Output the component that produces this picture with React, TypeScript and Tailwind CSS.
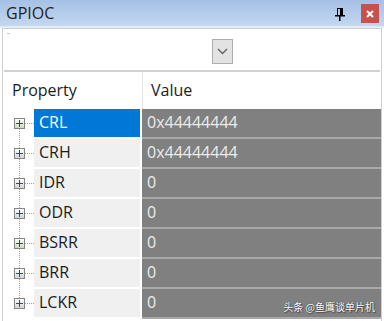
import React from "react";

const rows = [
  { name: "CRL", value: "0x44444444", selected: true },
  { name: "CRH", value: "0x44444444" },
  { name: "IDR", value: "0" },
  { name: "ODR", value: "0" },
  { name: "BSRR", value: "0" },
  { name: "BRR", value: "0" },
  { name: "LCKR", value: "0" },
];

function TreeGutter({ first, last }: { first: boolean; last: boolean }) {
  return (
    <svg width="31" height="30" viewBox="0 0 31 30" className="block shrink-0">
      <defs>
        <linearGradient id="pbg" x1="0" y1="0" x2="0" y2="1">
          <stop offset="0" stopColor="#ffffff" />
          <stop offset="1" stopColor="#d2d2d2" />
        </linearGradient>
      </defs>
      {!first && (
        <line x1="16.5" y1="0" x2="16.5" y2="9" stroke="#a0a0a0" strokeDasharray="1 1" />
      )}
      {!last && (
        <line x1="16.5" y1="20" x2="16.5" y2="30" stroke="#a0a0a0" strokeDasharray="1 1" />
      )}
      <line x1="22" y1="14.5" x2="31" y2="14.5" stroke="#a0a0a0" strokeDasharray="1 1" />
      <rect x="11.5" y="9.5" width="10" height="10" fill="url(#pbg)" stroke="#858585" />
      <rect x="13" y="14" width="7" height="1" fill="#2a4790" />
      <rect x="16" y="11" width="1" height="7" fill="#2a4790" />
    </svg>
  );
}

export default function App() {
  return (
    <div
      className="relative w-[384px] h-[321px] overflow-hidden bg-white text-[16px] text-[#1c1c1c]"
      style={{ fontFamily: '"Open Sans", "Noto Sans", sans-serif' }}
    >
      {/* Title bar */}
      <div className="h-[26px] flex items-center bg-gradient-to-b from-[#a6c1e6] to-[#c3d7f0] pl-[6px] pr-[5px]">
        <span className="leading-[26px] text-[#1e1e1e]">GPIOC</span>
        <div className="flex-1" />
        <svg width="12" height="13" viewBox="0 0 12 13" className="mr-[15px] mt-[2px]">
          <rect x="3.5" y="0.5" width="5" height="7" fill="none" stroke="#000" />
          <rect x="6" y="1" width="2" height="6" fill="#000" />
          <rect x="1" y="7" width="10" height="1.5" fill="#000" />
          <rect x="5" y="8" width="1.5" height="5" fill="#000" />
        </svg>
        <div className="w-[18px] h-[19px] bg-[#c9504d] flex items-center justify-center mt-[1px]">
          <svg width="8" height="8" viewBox="0 0 8 8">
            <path d="M1 1 L7 7 M7 1 L1 7" stroke="#ffffff" strokeWidth="2" />
          </svg>
        </div>
      </div>
      <div className="h-[2px] bg-[#e4ecf6]" />

      {/* Frame */}
      <div className="ml-[2px] w-[380px] border-l border-t border-r border-[#cfcfcf] h-[293px]">
        {/* toolbar */}
        <div className="relative h-[41px]">
          <div className="absolute left-[4px] top-[4px] w-[3px] h-[1px] bg-[#c8c8c8]" />
          <div className="flex justify-center pt-[10px] pl-[60px]">
            <div className="w-[21px] h-[25px] bg-[#e3e3e3] border border-[#adadad] flex items-center justify-center">
              <svg width="11" height="7" viewBox="0 0 11 7">
                <path d="M1 1 L5.5 5.5 L10 1" fill="none" stroke="#606060" strokeWidth="1.3" />
              </svg>
            </div>
          </div>
        </div>
        <div className="mx-[1px] h-[2px] bg-[#d2d2d2]" />
        {/* header */}
        <div className="flex h-[37px]">
          <div className="w-[139px] pl-[9px] flex items-center leading-[37px]">Property</div>
          <div className="w-[1px] bg-[#e3e3e3]" />
          <div className="flex-1 pl-[8px] flex items-center leading-[37px]">Value</div>
        </div>
        {/* rows */}
        {rows.map((r, i) => (
          <div key={r.name} className="flex h-[30px]">
            <TreeGutter first={i === 0} last={i === rows.length - 1} />
            <div
              className={`w-[106px] h-[28px] pl-[5px] leading-[28px] ${
                r.selected ? "bg-[#0078d7] text-white" : "bg-[#f0f0f0] text-[#1c1c1c]"
              }`}
            >
              <span className="relative top-[-1px]">{r.name}</span>
            </div>
            <div className="w-[2px]" />
            <div className="flex-1 flex flex-col">
              <div className="h-[28px] bg-[#808080] pl-[5px] leading-[28px] text-[#ececec]">
                <span className="relative top-[-1px]">{r.value}</span>
              </div>
              <div className="h-[2px] bg-[#a9a9a9]" />
            </div>
          </div>
        ))}
      </div>

      {/* watermark */}
      <div
        className="absolute right-[9px] top-[300px] text-[10px] leading-[14px] text-white"
        style={{
          fontFamily: '"Noto Sans CJK SC", "Open Sans", sans-serif',
          textShadow: "0 0 1px #333, 1px 1px 1px #444",
        }}
      >
        头条 @鱼鹰谈单片机
      </div>
    </div>
  );
}
